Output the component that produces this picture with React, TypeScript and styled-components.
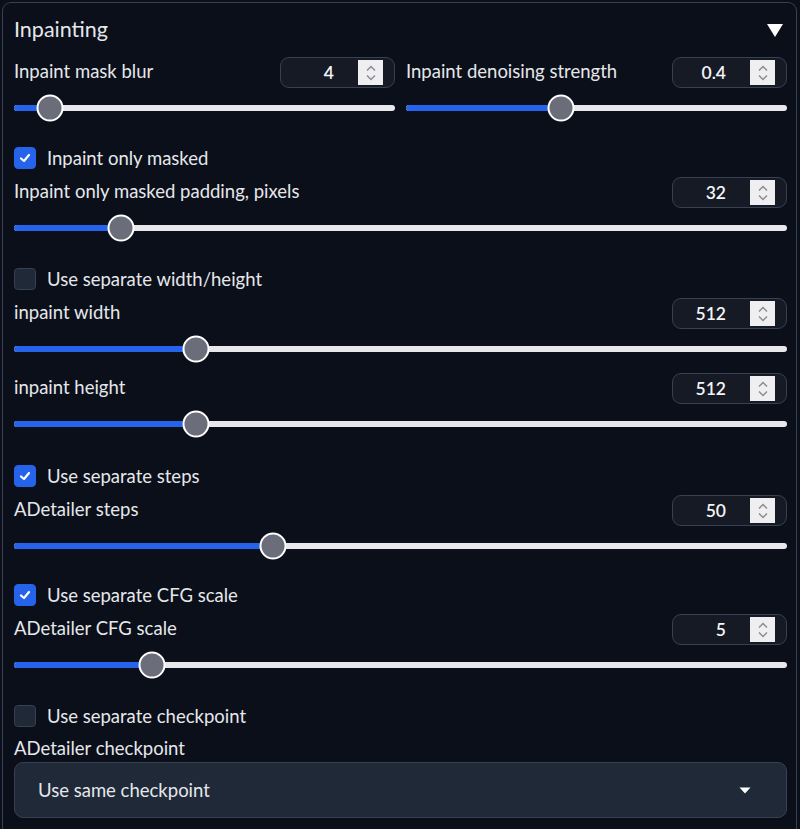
import React from "react";
import styled, { createGlobalStyle } from "styled-components";

const Global = createGlobalStyle`
  html, body { margin: 0; padding: 0; background: #0b0f19; }
  body { font-family: Lato, "Noto Sans", sans-serif; color: #e5e7eb; }
  * { box-sizing: border-box; }
`;

const Page = styled.div`
  padding: 2px 3px 0 2px;
  height: 829px;
  overflow: hidden;
`;

const Panel = styled.div`
  border: 1px solid #374151;
  border-bottom: none;
  border-radius: 9px 9px 0 0;
  padding: 11px 9px 0 11px;
  min-height: 900px;
  background: #0b0f19;
  display: flex;
  flex-direction: column;
`;

const TitleRow = styled.div`
  display: flex;
  align-items: center;
  justify-content: space-between;
  height: 32px;
  margin-bottom: 11px;
`;

const Title = styled.span`
  font-size: 21.5px;
  color: #e5e7eb;
  padding-bottom: 2px;
`;

const Columns = styled.div`
  display: grid;
  grid-template-columns: 1fr 1fr;
  gap: 11px;
`;

const Stack = styled.div<{ $gap: number; $top?: number }>`
  display: flex;
  flex-direction: column;
  gap: ${(p) => p.$gap}px;
  margin-top: ${(p) => p.$top ?? 0}px;
`;

const Field = styled.div`
  display: flex;
  flex-direction: column;
  gap: 7px;
`;

const FieldHead = styled.div`
  display: flex;
  align-items: center;
  justify-content: space-between;
  height: 31px;
`;

const Label = styled.span`
  font-size: 18.5px;
  color: #e5e7eb;
  padding-bottom: 4px;
  white-space: nowrap;
`;

const NumBox = styled.div`
  width: 115px;
  height: 31px;
  border: 1px solid #374151;
  border-radius: 9px;
  background: #151a25;
  display: flex;
  align-items: center;
  padding: 0 11px 0 8px;
`;

const NumText = styled.span`
  flex: 1;
  text-align: right;
  padding-right: 24px;
  font-size: 17.5px;
  font-weight: 600;
  color: #f3f4f6;
`;

const Spinner = styled.div`
  width: 25px;
  height: 25px;
  background: #efeff2;
  display: flex;
  align-items: center;
  justify-content: center;
`;

const Track = styled.div`
  position: relative;
  height: 26px;
  display: flex;
  align-items: center;
`;

const Rail = styled.div`
  width: 100%;
  height: 6px;
  border-radius: 3px;
  background: #e7e7ec;
  overflow: hidden;
`;

const Fill = styled.div`
  height: 100%;
  background: #2563eb;
`;

const Thumb = styled.div`
  position: absolute;
  top: 50%;
  width: 27px;
  height: 27px;
  border-radius: 50%;
  background: #6b6e7a;
  border: 2.5px solid #ffffff;
  transform: translate(-50%, -50%);
`;

const CheckRow = styled.label`
  display: flex;
  align-items: center;
  gap: 11px;
  height: 22px;
  font-size: 18.5px;
  color: #e5e7eb;
`;

const Box = styled.span<{ $on: boolean }>`
  width: 22px;
  height: 22px;
  border-radius: 4px;
  display: flex;
  align-items: center;
  justify-content: center;
  background: ${(p) => (p.$on ? "#2563eb" : "#1f2937")};
  border: 1px solid ${(p) => (p.$on ? "#2563eb" : "#374151")};
`;

const DropLabel = styled.div`
  font-size: 18.5px;
  color: #e5e7eb;
  margin-top: 9px;
  height: 24px;
  line-height: 24px;
`;

const Dropdown = styled.div`
  margin-top: 2px;
  height: 56px;
  border: 1px solid #374151;
  border-radius: 9px;
  background: #1f2937;
  display: flex;
  align-items: center;
  justify-content: space-between;
  padding: 0 35px 0 23px;
  font-size: 18.5px;
  color: #e5e7eb;
`;

const Spin = () => (
  <Spinner>
    <svg width="14" height="20" viewBox="0 0 14 20" fill="none" stroke="#8b8b92" strokeWidth="1.5">
      <path d="M3 7.5 L7 3.5 L11 7.5" />
      <path d="M3 12.5 L7 16.5 L11 12.5" />
    </svg>
  </Spinner>
);

type SliderProps = { label: string; value: number; min: number; max: number; text?: string };

const SliderField = ({ label, value, min, max, text }: SliderProps) => {
  const f = (value - min) / (max - min);
  const pos = `calc(13.5px + (100% - 27px) * ${f})`;
  return (
    <Field>
      <FieldHead>
        <Label>{label}</Label>
        <NumBox>
          <NumText>{text ?? value}</NumText>
          <Spin />
        </NumBox>
      </FieldHead>
      <Track>
        <Rail>
          <Fill style={{ width: pos }} />
        </Rail>
        <Thumb style={{ left: pos }} />
      </Track>
    </Field>
  );
};

const Check = ({ on, label }: { on: boolean; label: string }) => (
  <CheckRow>
    <Box $on={on}>
      {on && (
        <svg width="14" height="14" viewBox="0 0 14 14" fill="none" stroke="#fff" strokeWidth="2.2" strokeLinecap="round" strokeLinejoin="round">
          <path d="M3 7.5 L6 10 L11 4" />
        </svg>
      )}
    </Box>
    {label}
  </CheckRow>
);

export default function App() {
  return (
    <Page>
      <Global />
      <Panel>
        <TitleRow>
          <Title>Inpainting</Title>
          <svg width="18" height="16" viewBox="0 0 18 16" style={{ marginRight: 3 }}>
            <path d="M1 2 L17 2 L9 15 Z" fill="#ffffff" />
          </svg>
        </TitleRow>
        <Columns>
          <SliderField label="Inpaint mask blur" value={4} min={0} max={64} />
          <SliderField label="Inpaint denoising strength" value={0.4} min={0} max={1} text="0.4" />
        </Columns>
        <Stack $gap={8} $top={26}>
          <Check on label="Inpaint only masked" />
          <SliderField label="Inpaint only masked padding, pixels" value={32} min={0} max={256} />
        </Stack>
        <Stack $gap={8} $top={27}>
          <Check on={false} label="Use separate width/height" />
          <Stack $gap={11}>
            <SliderField label="inpaint width" value={512} min={64} max={2048} />
            <SliderField label="inpaint height" value={512} min={64} max={2048} />
          </Stack>
        </Stack>
        <Stack $gap={8} $top={28}>
          <Check on label="Use separate steps" />
          <SliderField label="ADetailer steps" value={50} min={1} max={150} />
        </Stack>
        <Stack $gap={8} $top={25}>
          <Check on label="Use separate CFG scale" />
          <SliderField label="ADetailer CFG scale" value={5} min={0} max={30} />
        </Stack>
        <Stack $gap={0} $top={27}>
          <Check on={false} label="Use separate checkpoint" />
          <DropLabel>ADetailer checkpoint</DropLabel>
          <Dropdown>
            Use same checkpoint
            <svg width="12" height="7" viewBox="0 0 12 7">
              <path d="M0.5 0.5 L11.5 0.5 L6 6.5 Z" fill="#ffffff" />
            </svg>
          </Dropdown>
        </Stack>
      </Panel>
    </Page>
  );
}
